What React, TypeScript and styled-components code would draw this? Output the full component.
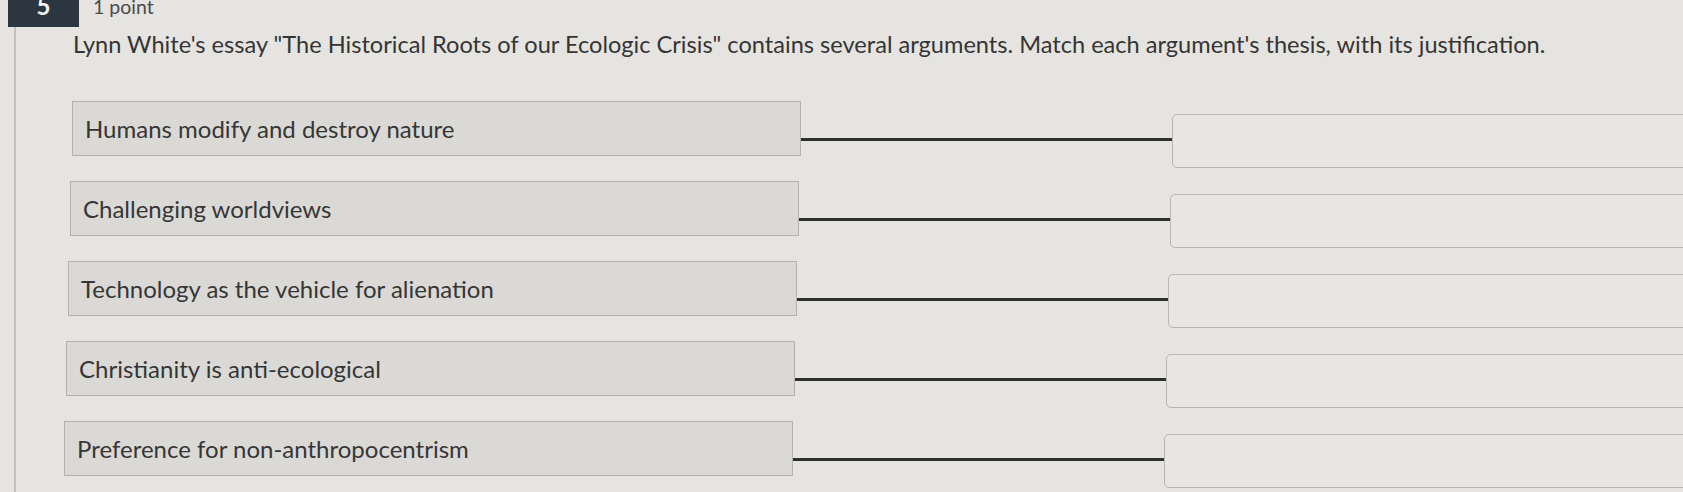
import styled, { createGlobalStyle } from 'styled-components';

const pairs = [
  'Humans modify and destroy nature',
  'Challenging worldviews',
  'Technology as the vehicle for alienation',
  'Christianity is anti-ecological',
  'Preference for non-anthropocentrism',
];

const GlobalStyle = createGlobalStyle`
  html, body {
    margin: 0;
    padding: 0;
    background: #e5e4e0;
    overflow: hidden;
  }
  body {
    font-family: Lato, 'Noto Sans', sans-serif;
    color: #383838;
  }
`;

const App = () => {
  return (
    <Page>
      <GlobalStyle />
      <Header>
        <Badge>5</Badge>
        <Points>1 point</Points>
      </Header>
      <Body>
        <Question>
          Lynn White's essay "The Historical Roots of our Ecologic Crisis" contains several
          arguments. Match each argument's thesis, with its justification.
        </Question>
        <Rows>
          {pairs.map((thesis, i) => (
            <Row key={thesis} $shift={4 - i * 2}>
              <Thesis>{thesis}</Thesis>
              <Connector />
              <DropZone />
            </Row>
          ))}
        </Rows>
      </Body>
    </Page>
  );
};

export default App;

const Page = styled.div`
  width: 1683px;
  height: 492px;
  overflow: hidden;
  background: #e5e4e0;
`;

const Header = styled.div`
  display: flex;
  align-items: flex-start;
  gap: 14px;
  margin-top: -5px;
  padding-left: 8px;
  height: 32px;
`;

const Badge = styled.div`
  width: 71px;
  height: 32px;
  background: #2b3640;
  color: #f2f2f2;
  font-size: 24px;
  font-weight: 700;
  line-height: 1;
  display: flex;
  align-items: flex-end;
  justify-content: center;
  padding-bottom: 9px;
  box-sizing: border-box;
`;

const Points = styled.div`
  font-size: 19.5px;
  line-height: 1.2;
  color: #4a4a4a;
`;

const Body = styled.div`
  margin-left: 14px;
  border-left: 2px solid #c2c1bd;
  padding: 3px 0 0 52px;
  height: 470px;
`;

const Question = styled.p`
  margin: 0 0 43px 5px;
  font-size: 23.6px;
  line-height: 1.2;
  color: #353535;
  white-space: nowrap;
`;

const Rows = styled.div`
  display: flex;
  flex-direction: column;
  gap: 13px;
`;

const Row = styled.div<{ $shift: number }>`
  display: flex;
  align-items: flex-start;
  margin-left: ${(p) => p.$shift}px;
`;

const Thesis = styled.div`
  width: 729px;
  height: 55px;
  box-sizing: border-box;
  flex-shrink: 0;
  display: flex;
  align-items: center;
  padding-left: 12px;
  background: #dad9d6;
  border: 1.5px solid #b3b2af;
  font-size: 24px;
  color: #363636;
  white-space: nowrap;
`;

const Connector = styled.div`
  width: 371px;
  height: 3px;
  flex-shrink: 0;
  background: #2f2f2f;
  margin-top: 37px;
`;

const DropZone = styled.div`
  width: 540px;
  height: 54px;
  flex-shrink: 0;
  margin-top: 13px;
  box-sizing: border-box;
  border: 1.5px solid #b7b6b3;
  border-radius: 5px;
  background: #e7e6e2;
`;
